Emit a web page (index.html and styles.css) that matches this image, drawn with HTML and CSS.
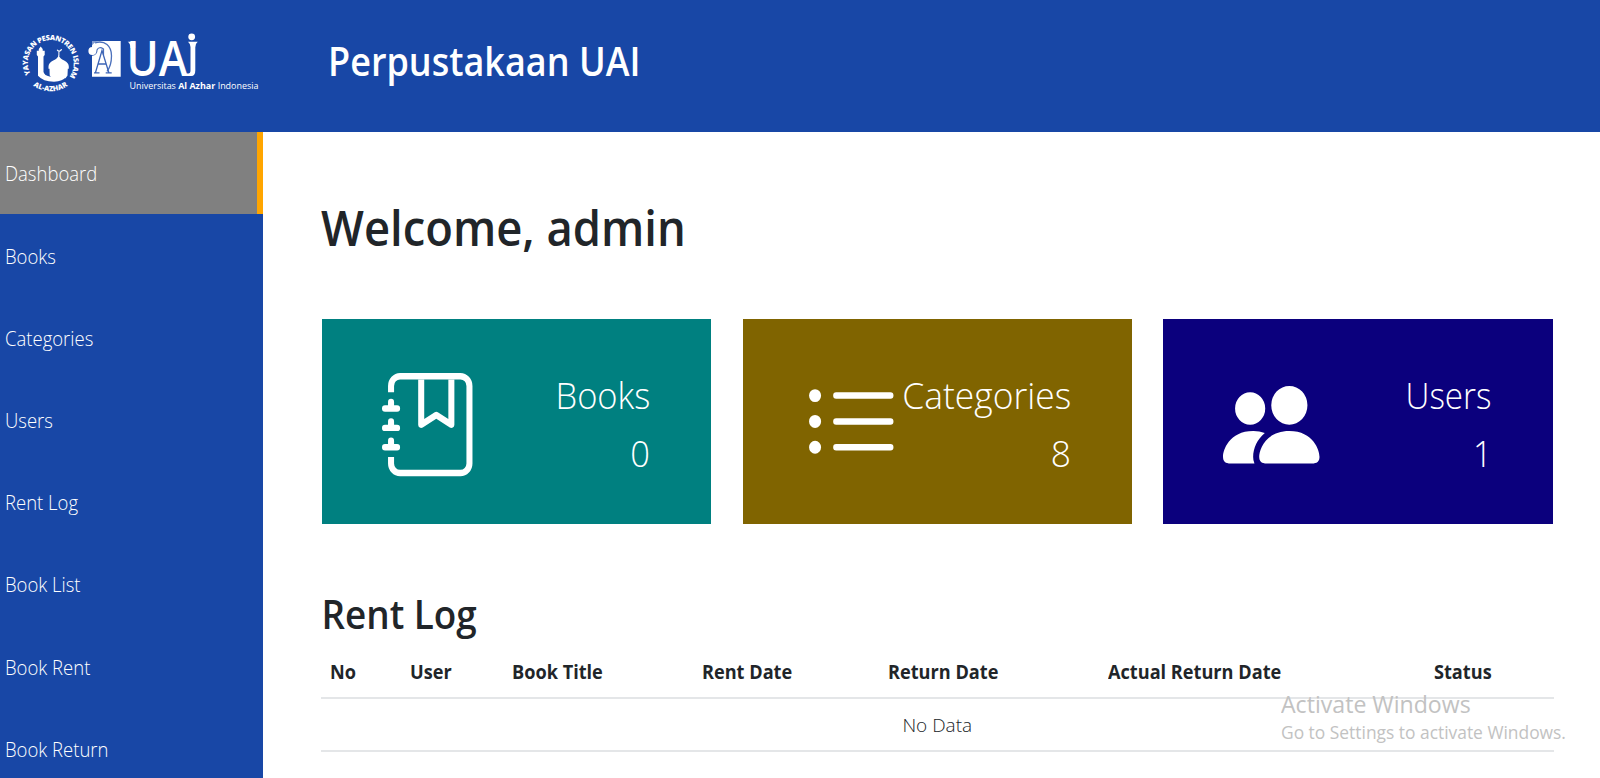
FILE: index.html
```html
<!DOCTYPE html>
<html lang="en">
<head>
<meta charset="utf-8">
<title>Perpustakaan UAI</title>
<link rel="stylesheet" href="styles.css">
</head>
<body>
<header class="topbar">
  <svg class="logo" viewBox="0 0 263 132" fill="#fff">
    <defs>
      <path id="ring-top" d="M30.500 74A23 23 0 1 1 71 74"/>
      <path id="ring-bottom" d="M24 74.700A29.500 29.500 0 0 0 77 74.700"/>
    </defs>
    <text class="ring-text" textLength="98"><textPath href="#ring-top">YAYASAN PESANTREN ISLAM</textPath></text>
    <text class="ring-text" text-anchor="middle"><textPath href="#ring-bottom" startOffset="50%">AL-AZHAR</textPath></text>
    <path d="M40.700 46.500l2 2.600v1.700h2v4.200l-1.200 1.500V72q1 3.500 6 4.500H66q-3 5-12 5.200-11-.2-16-6V56.500L36.800 55v-4.200h2v-1.700z"/>
    <path d="M58.700 55q1 3.500 5.500 5.600 4.600 2.400 4.600 6v2.200h-1l-.3 6.700-2 2.800H54q-3-.5-4.300-2.800l-.2-6.700h-1v-2.200q0-3.600 4.700-6 4.500-2.100 5.500-5.600z"/>
    <path d="M57.200 49.800a2.200 2.200 0 0 0 4.200-.8" fill="none" stroke="#fff" stroke-width="1.200"/>
    <path d="M58.900 51.500v4.500" stroke="#fff" stroke-width="1"/>
    <path d="M92 41h28.700v35.700H92z"/>
    <path d="M95 42.800c10-3 16.500 3.500 16.500 13 0 8-2 12.500-4.500 15.500" fill="none" stroke="#4b70bb" stroke-width="1.300"/>
    <path d="M92 41h7q-5 1-7 4.500z" fill="#7f9bd2"/>
    <path d="M92 55.500q5-1 5-5.500 2-4 6.500-1v6" fill="none" stroke="#4b70bb" stroke-width="1.200"/>
    <path d="M95.500 72.500l6.500-22 6.800 22M98.300 64h8.200M94 72.800h5.500M105.700 72.800h6" fill="none" stroke="#3d65b6" stroke-width="1.300"/>
    <circle cx="92.300" cy="51" r="3.900"/>
    <text class="logo-name" x="126.500" y="76" textLength="61" lengthAdjust="spacingAndGlyphs">UA</text>
    <path d="M127.700 41.700h7.500V48h-4.700q0-4.500-2.800-6.300zM188 41.700h9.700q-2.400 2-2.400 5.500v23q0 5.800-4 5.800h-5l-1-2.500h3q2.200 0 2.200-3V47q0-3.200-2.500-5.300z"/>
    <circle cx="191.700" cy="36.800" r="3.400"/>
    <text class="logo-sub" x="129.500" y="88.500" textLength="129" lengthAdjust="spacingAndGlyphs">Universitas <tspan class="logo-strong">Al Azhar</tspan> Indonesia</text>
  </svg>
  <h1 class="brand">Perpustakaan UAI</h1>
</header>
<div class="layout">
  <nav class="sidebar">
    <a class="nav-item active"><span>Dashboard</span></a>
    <a class="nav-item"><span>Books</span></a>
    <a class="nav-item"><span>Categories</span></a>
    <a class="nav-item"><span>Users</span></a>
    <a class="nav-item"><span>Rent Log</span></a>
    <a class="nav-item"><span>Book List</span></a>
    <a class="nav-item"><span>Book Rent</span></a>
    <a class="nav-item"><span>Book Return</span></a>
  </nav>
  <main class="content">
    <h2 class="welcome">Welcome, admin</h2>
    <section class="cards">
      <div class="card card-books">
        <svg class="icon" viewBox="0 0 16 16" preserveAspectRatio="none" fill="#fff">
          <path fill-rule="evenodd" d="M6 8V1h1v6.117L8.743 6.070a.5.5 0 0 1 .514 0L11 7.117V1h1v7a.5.5 0 0 1-.757.429L9 7.083 6.757 8.430A.5.5 0 0 1 6 8z"/>
          <path d="M3 0h10a2 2 0 0 1 2 2v12a2 2 0 0 1-2 2H3a2 2 0 0 1-2-2v-1h1v1a1 1 0 0 0 1 1h10a1 1 0 0 0 1-1V2a1 1 0 0 0-1-1H3a1 1 0 0 0-1 1v1H1V2a2 2 0 0 1 2-2z"/>
          <path d="M1 5v-.5a.5.5 0 0 1 1 0V5h.5a.5.5 0 0 1 0 1h-2a.5.5 0 0 1 0-1H1zm0 3v-.5a.5.5 0 0 1 1 0V8h.5a.5.5 0 0 1 0 1h-2a.5.5 0 0 1 0-1H1zm0 3v-.5a.5.5 0 0 1 1 0v.5h.5a.5.5 0 0 1 0 1h-2a.5.5 0 0 1 0-1H1z"/>
        </svg>
        <div class="stat"><span>Books</span><span>0</span></div>
      </div>
      <div class="card card-categories">
        <svg class="icon" viewBox="0 0 16 16" preserveAspectRatio="none" fill="#fff">
          <path fill-rule="evenodd" d="M5 11.500a.5.5 0 0 1 .5-.5h9a.5.5 0 0 1 0 1h-9a.5.5 0 0 1-.5-.5zm0-4a.5.5 0 0 1 .5-.5h9a.5.5 0 0 1 0 1h-9a.5.5 0 0 1-.5-.5zm0-4a.5.5 0 0 1 .5-.5h9a.5.5 0 0 1 0 1h-9a.5.5 0 0 1-.5-.5zm-3 1a1 1 0 1 0 0-2 1 1 0 0 0 0 2zm0 4a1 1 0 1 0 0-2 1 1 0 0 0 0 2zm0 4a1 1 0 1 0 0-2 1 1 0 0 0 0 2z"/>
        </svg>
        <div class="stat stat-wide"><span>Categories</span><span>8</span></div>
      </div>
      <div class="card card-users">
        <svg class="icon" viewBox="0 0 16 16" preserveAspectRatio="none" fill="#fff">
          <path d="M7 14s-1 0-1-1 1-4 5-4 5 3 5 4-1 1-1 1H7zm4-6a3 3 0 1 0 0-6 3 3 0 0 0 0 6z"/>
          <path d="M5.216 14A2.238 2.238 0 0 1 5 13c0-1.355.68-2.750 1.936-3.720A6.325 6.325 0 0 0 5 9c-4 0-5 3-5 4s1 1 1 1h4.216zM4.500 8a2.500 2.500 0 1 0 0-5 2.500 2.500 0 0 0 0 5z"/>
        </svg>
        <div class="stat stat-users"><span>Users</span><span>1</span></div>
      </div>
    </section>
    <h3 class="section-title">Rent Log</h3>
    <table class="log">
      <colgroup><col class="c-no"><col class="c-user"><col class="c-book"><col class="c-rent"><col class="c-return"><col class="c-actual"><col class="c-status"></colgroup>
      <thead><tr><th><span>No</span></th><th><span>User</span></th><th><span>Book Title</span></th><th><span>Rent Date</span></th><th><span>Return Date</span></th><th><span>Actual Return Date</span></th><th><span>Status</span></th></tr></thead>
      <tbody><tr><td colspan="7">No Data</td></tr></tbody>
    </table>
  </main>
</div>
<aside class="watermark">
  <div class="wm-title">Activate Windows</div>
  <div class="wm-text">Go to Settings to activate Windows.</div>
</aside>
</body>
</html>
```
FILE: styles.css
```css
* { box-sizing: border-box; }
body {
  margin: 0;
  height: 778px;
  overflow: hidden;
  background: #fff;
  color: #212529;
  font-family: "Open Sans", "Noto Sans", sans-serif;
}
h1, h2, h3 { margin: 0; font-weight: 600; white-space: nowrap; transform-origin: left; }

.topbar { display: flex; height: 132.300px; background: #1847a6; color: #fff; }
.logo { flex: none; width: 263px; height: 132px; }
.ring-text { font-size: 7.200px; font-weight: 800; }
.logo-name { font-size: 48px; font-weight: 600; }
.logo-sub { font-size: 9px; }
.logo-strong { font-weight: 700; }
.brand { margin: 33px 0 0 65px; font-size: 40.500px; line-height: 56px; transform: scaleX(.889); }

.layout { display: flex; height: 646px; }
.sidebar { flex: none; width: 263px; background: #1847a6; overflow: hidden; }
.nav-item {
  display: flex;
  align-items: center;
  height: 82.200px;
  padding: 1px 0 0 4.500px;
  color: #fff;
  font-size: 20px;
  font-weight: 300;
}
.nav-item span { transform: scaleX(.925); transform-origin: left; }
.active { background: #808080; border-right: 6px solid #ffa500; }

.content { flex: 1; padding: 0 46px 0 57.500px; }
.welcome { padding-top: 60px; font-size: 49px; line-height: 70px; transform: scaleX(.926); }
.cards { display: flex; gap: 31.500px; margin: 57px 1.500px 0; }
.card {
  display: flex;
  justify-content: space-between;
  flex: 1 1 0;
  min-width: 0;
  height: 205px;
  padding: 54px 61px 0 60px;
  color: #fff;
}
.card-books { background: #008080; }
.card-categories { background: #806400; }
.card-users { background: #0b007d; }
.icon { flex: none; width: 96.500px; height: 103.300px; }
.stat {
  display: flex;
  flex-direction: column;
  align-items: flex-end;
  min-width: 0;
  margin-top: -6px;
  font-size: 36.500px;
  font-weight: 350;
  line-height: 57.500px;
  white-space: nowrap;
}
.stat span { transform: scaleX(.945); transform-origin: right; }
.stat-wide span { transform: scaleX(.97); }
.stat-users span { transform: scaleX(.91); }
.section-title { padding: 62px 0 0 .5px; margin-bottom: -1px; font-size: 39px; line-height: 56px; transform: scaleX(.945); }
.log { width: 1233.500px; table-layout: fixed; border-collapse: collapse; font-size: 19px; }
.log th, .log td { padding: 0; border-bottom: 2px solid #e4e6e8; white-space: nowrap; }
.log th { height: 57px; padding: 6px 0 0 9px; text-align: left; font-weight: 700; }
.log th span { display: inline-block; transform: scaleX(.955); transform-origin: left; }
.log td { height: 53px; text-align: center; font-weight: 300; }
.c-no { width: 80px; }
.c-user { width: 102px; }
.c-book { width: 190.500px; }
.c-rent { width: 186px; }
.c-return { width: 220px; }
.c-actual { width: 326px; }

.watermark {
  position: absolute;
  left: 1281px;
  top: 688px;
  color: #c2c2c2;
  white-space: nowrap;
}
.wm-title { font-size: 24px; line-height: 32px; transform: scaleX(.963); transform-origin: left; }
.wm-text { font-size: 18.500px; line-height: 24px; transform: scaleX(.94); transform-origin: left; }
```
